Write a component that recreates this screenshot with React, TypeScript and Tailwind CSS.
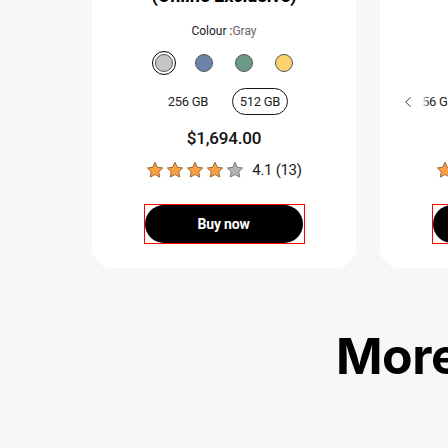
import { ChevronLeft } from "lucide-react"

const Star = ({ on }: { on: boolean }) => (
  <svg width="18" height="18" viewBox="0 0 24 24">
    <path
      d="M12 1.8l3.1 6.6 7.1.9-5.2 5 1.3 7.1L12 18l-6.3 3.4 1.3-7.1-5.2-5 7.1-.9z"
      fill={on ? "#f9a142" : "#b3b3b3"}
      stroke={on ? "#8c5a26" : "#6e6e6e"}
      strokeWidth="1.2"
      strokeLinejoin="round"
    />
  </svg>
)

const Stars = () => (
  <div className="flex items-center gap-[2px]">
    <Star on />
    <Star on />
    <Star on />
    <Star on />
    <Star on={false} />
  </div>
)

const BuyButton = () => (
  <div className="w-[161px] h-[40px] border border-[#ff0000] flex items-center">
    <button className="w-[158px] h-[38px] rounded-full bg-black text-white font-bold text-[14px] tracking-[-0.2px]">
      Buy now
    </button>
  </div>
)

export default function App() {
  const colours = ["#6a84a8", "#6c9985", "#fdd26e"]

  return (
    <div className="w-[448px] h-[448px] bg-[#f7f7f7] overflow-hidden" style={{ fontFamily: "Roboto, 'Noto Sans', sans-serif" }}>
      <div className="flex gap-[24px] pl-[92px] mt-[-16px]">
        {/* card 1 */}
        <div className="w-[264px] shrink-0 bg-white rounded-[20px] pb-[24px] flex flex-col items-center">
          <div className="h-[24px] leading-[24px] text-[18px] font-bold text-black">(Online Exclusive)</div>
          <div className="mt-[15px] h-[16px] leading-[16px] text-[12px] text-[#222]">
            Colour :<span className="text-[#666]">Gray</span>
          </div>
          <div className="mt-[12px] flex gap-[16px]">
            <div className="w-[24px] h-[24px] rounded-full border border-black flex items-center justify-center">
              <div className="w-[18px] h-[18px] rounded-full bg-[#c4c5c7] border border-[#555]" />
            </div>
            {colours.map((c) => (
              <div key={c} className="w-[24px] h-[24px] flex items-center justify-center">
                <div className="w-[18px] h-[18px] rounded-full border border-[#555]" style={{ backgroundColor: c }} />
              </div>
            ))}
          </div>
          <div className="mt-[13px] flex gap-[16px] text-[13px] text-[#222] tracking-[-0.3px]">
            <div className="w-[56px] h-[27px] flex items-center justify-center rounded-full border border-transparent">256 GB</div>
            <div className="w-[56px] h-[27px] flex items-center justify-center rounded-full border border-[#111]">512 GB</div>
          </div>
          <div className="mt-[11px] h-[24px] leading-[24px] text-[17px] font-medium text-[#111] tracking-[-0.2px]">$1,694.00</div>
          <div className="mt-[11px] h-[18px] flex items-center gap-[8px]">
            <Stars />
            <span className="text-[15px] leading-[16px] text-[#222] tracking-[-0.3px]">4.1 (13)</span>
          </div>
          <div className="mt-[25px]">
            <BuyButton />
          </div>
        </div>

        {/* card 2 */}
        <div className="w-[264px] shrink-0 bg-white rounded-[20px] pb-[24px] flex flex-col">
          <div className="h-[24px]" />
          <div className="mt-[15px] h-[16px]" />
          <div className="mt-[12px] h-[24px]" />
          <div className="mt-[13px] h-[27px] flex items-center pl-[19px]">
            <ChevronLeft size={18} strokeWidth={1.2} className="text-[#222]" />
            <div className="relative ml-[-2px] text-[13px] text-[#222] tracking-[-0.3px]">
              <span>256 GB</span>
              <div className="absolute left-0 top-0 h-full w-[14px] bg-gradient-to-r from-white via-white to-transparent" />
            </div>
          </div>
          <div className="mt-[11px] h-[24px]" />
          <div className="mt-[11px] h-[18px] pl-[56px]">
            <Stars />
          </div>
          <div className="mt-[25px] pl-[52px]">
            <BuyButton />
          </div>
        </div>
      </div>

      <div className="mt-[58px] pl-[336px] whitespace-nowrap text-[50px] leading-[60px] font-bold text-black tracking-[-0.5px]" style={{ fontFamily: "Inter, sans-serif" }}>
        More to explore
      </div>
    </div>
  )
}
